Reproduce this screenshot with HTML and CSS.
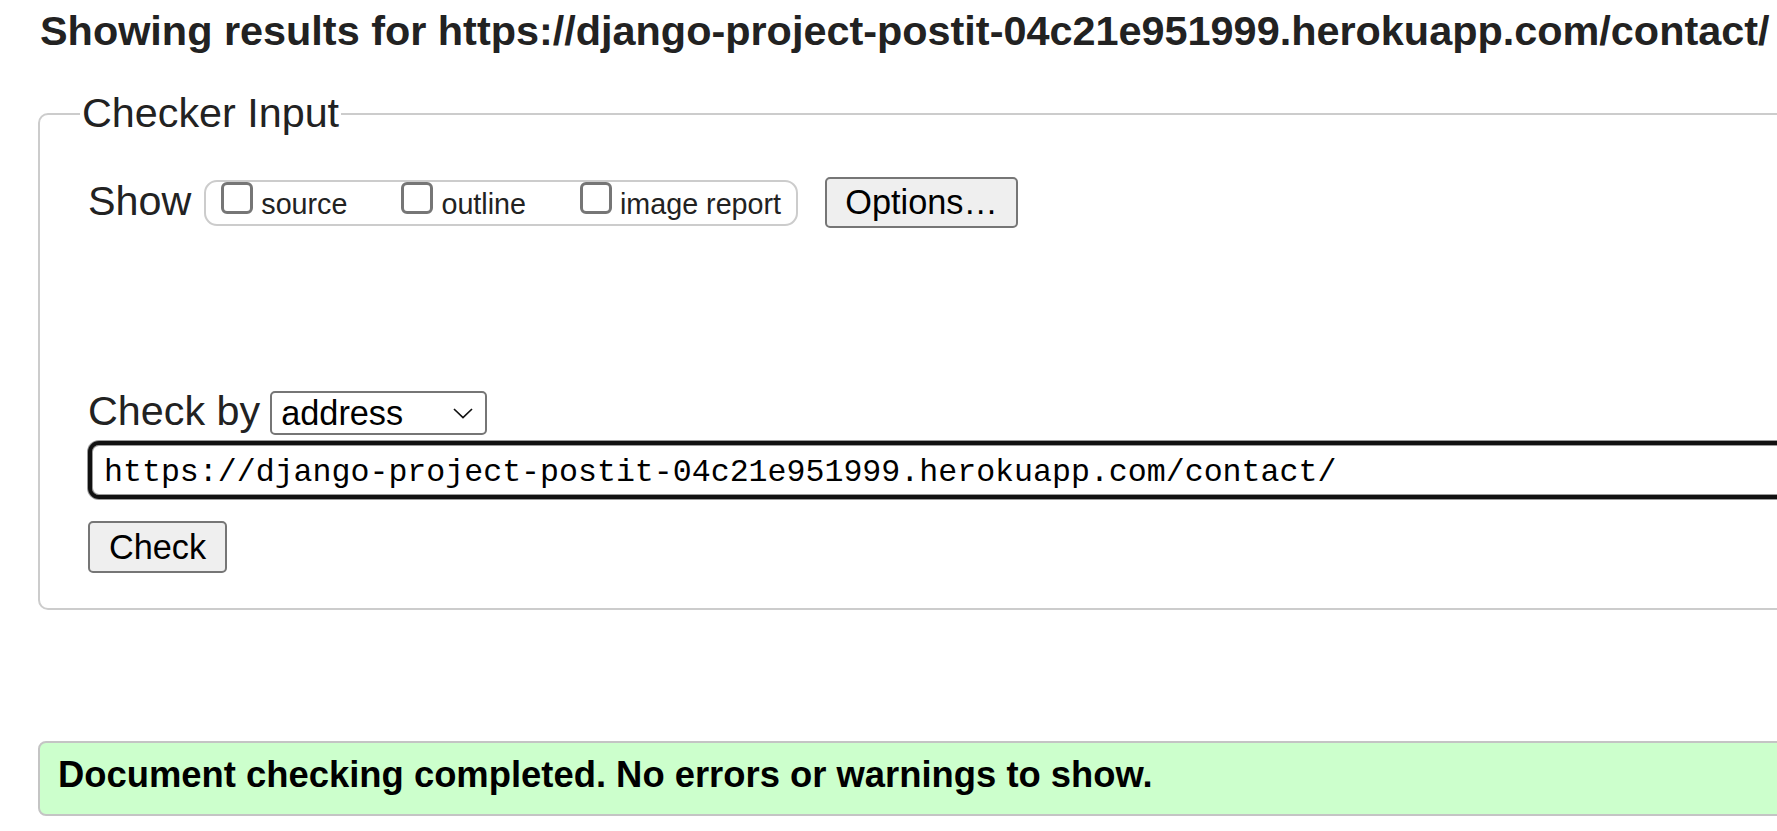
FILE: index.html
```html
<!DOCTYPE html>
<html lang="en">
<head>
<meta charset="utf-8">
<title>Nu Html Checker</title>
<link rel="stylesheet" href="styles.css">
</head>
<body>
<h2 class="results-heading">Showing results for https://django-project-postit-04c21e951999.herokuapp.com/contact/</h2>
<form class="checker-form">
  <fieldset class="checker-input">
    <legend class="checker-legend">Checker Input</legend>
    <div class="show-row">
      <span class="row-label show-label">Show</span>
      <div class="show-options">
        <label class="opt"><input type="checkbox" class="cb"><span class="opt-text">source</span></label>
        <label class="opt"><input type="checkbox" class="cb"><span class="opt-text">outline</span></label>
        <label class="opt"><input type="checkbox" class="cb"><span class="opt-text">image report</span></label>
      </div>
      <button type="button" class="btn options-btn">Options…</button>
    </div>
    <div class="checkby-row">
      <span class="row-label">Check by</span>
      <div class="select-wrap">
        <select class="select"><option>address</option></select>
        <svg class="chevron" width="20" height="11" viewBox="0 0 20 11" aria-hidden="true"><path d="M1 1 L10 9.5 L19 1" fill="none" stroke="#111" stroke-width="1.7"/></svg>
      </div>
    </div>
    <input class="url-input" type="url" value="https://django-project-postit-04c21e951999.herokuapp.com/contact/">
    <div class="submit-row"><button type="button" class="btn check-btn">Check</button></div>
  </fieldset>
</form>
<div class="result-success">Document checking completed. No errors or warnings to show.</div>
</body>
</html>
```

FILE: styles.css
```css
html {
  overflow: hidden;
  background: #fff;
}

body {
  margin: 0;
  padding: 0 0 0 38px;
  font-family: "Liberation Sans", Arial, sans-serif;
  color: #222;
}

.results-heading {
  margin: 8px 0 35px 2px;
  font-size: 41.4px;
  font-weight: bold;
  line-height: 47px;
  white-space: nowrap;
  color: #222;
}

.checker-form {
  margin: 0;
}

.checker-input {
  box-sizing: border-box;
  width: 1900px;
  margin: 0;
  padding: 40px 0 35px 48px;
  border: 2px solid #cccccc;
  border-radius: 10px;
  min-width: 0;
}

.checker-legend {
  margin-left: -8px;
  padding: 0 2px;
  font-size: 41.3px;
  line-height: 47px;
  color: #222;
}

.row-label {
  font-size: 41.3px;
  line-height: 47px;
  color: #222;
}

.show-row {
  display: flex;
  align-items: center;
  height: 51px;
}

.show-label {
  margin-bottom: 3px;
}

.show-options {
  box-sizing: border-box;
  display: flex;
  align-items: flex-start;
  height: 46px;
  margin-left: 13px;
  padding: 0 15px 0 15px;
  border: 2px solid #cccccc;
  border-radius: 13px;
}

.opt {
  display: flex;
  align-items: flex-start;
}

.opt + .opt {
  margin-left: 54px;
}

.cb {
  appearance: none;
  -webkit-appearance: none;
  box-sizing: border-box;
  width: 32px;
  height: 32px;
  margin: 0;
  border: 3px solid #767676;
  border-radius: 6px;
  background: #fff;
}

.opt-text {
  margin-left: 8px;
  margin-top: 6.5px;
  font-size: 28.7px;
  line-height: 33px;
  color: #222;
}

.btn {
  box-sizing: border-box;
  padding: 0;
  font-family: "Liberation Sans", Arial, sans-serif;
  font-size: 34.3px;
  color: #000;
  background: #efefef;
  border: 2px solid #767676;
  border-radius: 5px;
  text-align: center;
}

.options-btn {
  width: 193px;
  height: 51px;
  margin-left: 27px;
}

.checkby-row {
  display: flex;
  align-items: baseline;
  margin-top: 160px;
}

.select-wrap {
  position: relative;
  margin-left: 10px;
}

.select {
  appearance: none;
  -webkit-appearance: none;
  box-sizing: border-box;
  width: 217px;
  height: 44px;
  margin: 0;
  padding: 0 40px 0 9px;
  font-family: "Liberation Sans", Arial, sans-serif;
  font-size: 34.3px;
  color: #000;
  background: #fff;
  border: 2px solid #767676;
  border-radius: 5px;
}

.chevron {
  position: absolute;
  right: 14px;
  top: 17px;
  pointer-events: none;
}

.url-input {
  display: block;
  box-sizing: border-box;
  width: 1800px;
  height: 58px;
  margin: 6px 0 0;
  padding: 5px 12px 0;
  font-family: "Liberation Mono", "DejaVu Sans Mono", monospace;
  font-size: 31.6px;
  color: #000;
  background: #fff;
  border: 4px solid #111;
  border-radius: 11px;
  box-shadow: 0 0 0 1px #9a9a9a, inset 0 0 0 1px #9a9a9a;
  outline: none;
}

.submit-row {
  margin-top: 22px;
}

.check-btn {
  width: 139px;
  height: 52px;
  display: block;
}

.result-success {
  box-sizing: border-box;
  width: 1800px;
  margin-top: 131px;
  padding: 11px 18px 18.5px;
  font-size: 36.4px;
  font-weight: bold;
  line-height: 41.5px;
  color: #000;
  background: #ccffcc;
  border: 2px solid #c4c4c4;
  border-radius: 8px;
  white-space: nowrap;
}
```
